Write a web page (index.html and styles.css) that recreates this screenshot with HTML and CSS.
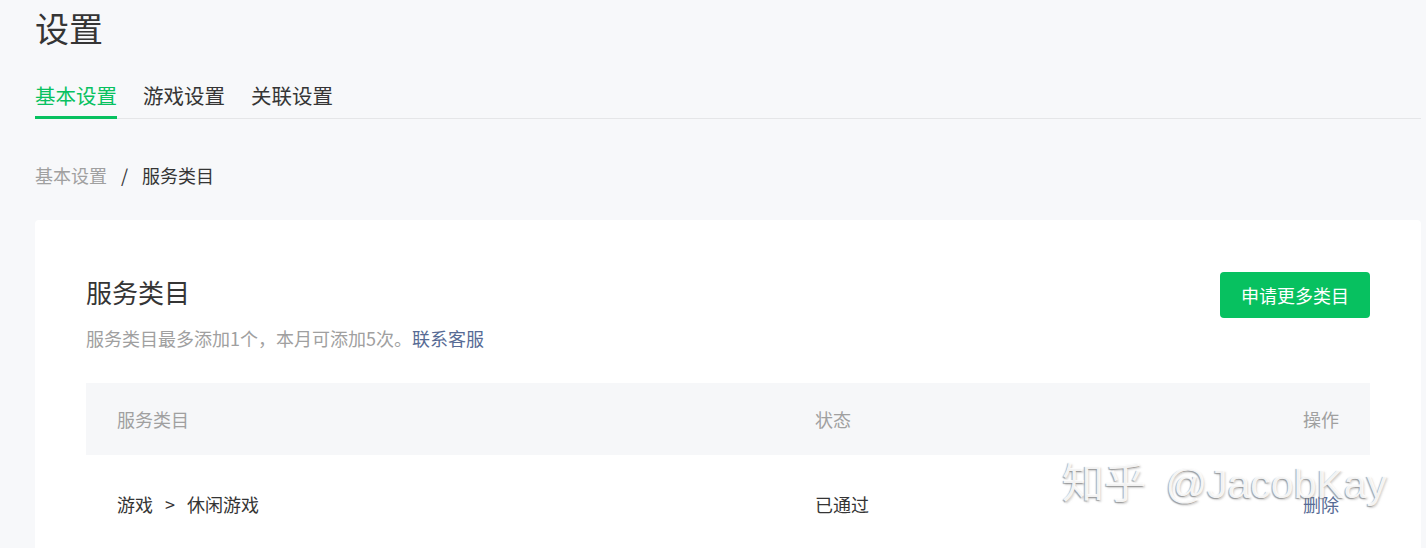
FILE: index.html
```html
<!DOCTYPE html>
<html lang="zh-CN">
<head>
<meta charset="utf-8">
<title>设置</title>
<link rel="stylesheet" href="styles.css">
</head>
<body>
<div class="page">
  <h1 class="title">设置</h1>
  <div class="tabs">
    <div class="tab active">基本设置</div>
    <div class="tab">游戏设置</div>
    <div class="tab">关联设置</div>
  </div>
  <div class="crumbs">
    <span class="crumb-link">基本设置</span>
    <span class="crumb-sep">/</span>
    <span class="crumb-cur">服务类目</span>
  </div>
  <div class="card">
    <div class="card-head">
      <div class="card-info">
        <h2 class="card-title">服务类目</h2>
        <p class="card-desc">服务类目最多添加1个，本月可添加5次。<a class="link">联系客服</a></p>
      </div>
      <button class="btn-primary">申请更多类目</button>
    </div>
    <div class="table">
      <div class="row head">
        <div class="cell">服务类目</div>
        <div class="cell">状态</div>
        <div class="cell right">操作</div>
      </div>
      <div class="row body">
        <div class="cell">游戏<span class="arrow">&gt;</span>休闲游戏</div>
        <div class="cell">已通过</div>
        <div class="cell right"><a class="link">删除</a></div>
      </div>
    </div>
  </div>
  <div class="watermark"><span class="wm-cjk">知乎</span> @JacobKay</div>
</div>
</body>
</html>
```
FILE: styles.css
```css
html, body {
  margin: 0;
  padding: 0;
  background: #f7f8fa;
  height: 100%;
  overflow: hidden;
}
body {
  font-family: "Noto Sans CJK SC", "Noto Sans", sans-serif;
  color: #353535;
}
.page {
  position: relative;
  padding: 4px 5px 0 35px;
}
.title {
  margin: 0;
  font-size: 34px;
  line-height: 48px;
  font-weight: 400;
  color: #353535;
}
.tabs {
  display: flex;
  gap: 26px;
  margin-top: 28px;
  border-bottom: 1px solid #e5e6e8;
}
.tab {
  font-size: 20.5px;
  line-height: 30px;
  padding-bottom: 6px;
  color: #353535;
  border-bottom: 3px solid transparent;
  margin-bottom: -1px;
}
.tab.active {
  color: #07c160;
  border-bottom-color: #07c160;
}
.crumbs {
  margin-top: 43px;
  font-size: 18px;
  line-height: 26px;
  display: flex;
  align-items: center;
}
.crumb-link {
  color: #a0a0a0;
}
.crumb-sep {
  margin: 0 14px;
  color: #353535;
}
.crumb-cur {
  color: #353535;
}
.card {
  margin-top: 32px;
  background: #fff;
  border-radius: 4px;
  padding: 52px 51px 40px;
}
.card-head {
  display: flex;
  justify-content: space-between;
  align-items: flex-start;
}
.card-info {
  padding-top: 2px;
}
.card-title {
  margin: 0;
  font-size: 26px;
  line-height: 36px;
  font-weight: 400;
  color: #353535;
}
.card-desc {
  margin: 15px 0 0;
  font-size: 18px;
  line-height: 26px;
  color: #a0a0a0;
}
.link {
  color: #576b95;
  text-decoration: none;
}
.btn-primary {
  width: 150px;
  height: 46px;
  border: 0;
  border-radius: 4px;
  background: #07c160;
  color: #fff;
  font-family: inherit;
  font-size: 18px;
  padding: 0;
}
.table {
  margin-top: 32px;
}
.row {
  display: grid;
  grid-template-columns: 729px 1fr 1fr;
  align-items: center;
  font-size: 18px;
  line-height: 26px;
}
.row.head {
  height: 72px;
  background: #f6f7f9;
  color: #a0a0a0;
}
.row.body {
  height: 98px;
  color: #353535;
}
.cell:first-child {
  padding-left: 31px;
}
.cell.right {
  text-align: right;
  padding-right: 31px;
}
.arrow {
  margin: 0 12px;
}
.watermark {
  position: absolute;
  left: 1062px;
  top: 454px;
  font-family: "Liberation Sans", "Noto Sans CJK SC", sans-serif;
  font-size: 41px;
  line-height: 60px;
  color: rgba(255, 255, 255, 0.9);
  text-shadow: -1px 1px 1px rgba(110, 110, 110, 0.6), 1px 2px 2px rgba(140, 140, 140, 0.35);
  white-space: nowrap;
  pointer-events: none;
}
.wm-cjk {
  font-size: 42px;
  margin-right: 8px;
}
```
